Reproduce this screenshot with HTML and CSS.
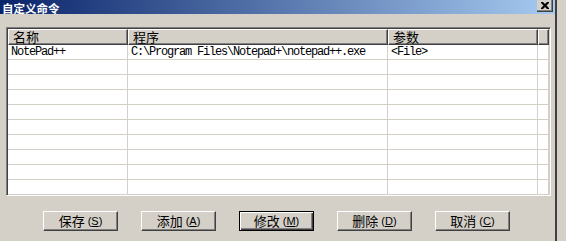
FILE: index.html
```html
<!DOCTYPE html>
<html>
<head>
<meta charset="utf-8">
<link rel="stylesheet" href="styles.css">
</head>
<body>
<div class="win">
  <div class="titlebar">
    <span class="title">自定义命令</span>
    <span class="close">
      <svg width="8" height="7" viewBox="0 0 8 7"><path d="M0 0h2l2 2 2-2h2v1l-2.5 2.5 2.5 2.5v1h-2l-2-2-2 2h-2v-1l2.5-2.5-2.5-2.5z" fill="#000"/></svg>
    </span>
  </div>
  <div class="body">
    <div class="list">
      <div class="head">
        <div class="hc">名称</div>
        <div class="hc">程序</div>
        <div class="hc">参数</div>
        <div class="hc"></div>
      </div>
      <div class="rows">
        <div class="row"><div class="c">NotePad++</div><div class="c">C:\Program Files\Notepad+\notepad++.exe</div><div class="c">&lt;File&gt;</div><div class="c"></div></div>
        <div class="row"><div class="c"></div><div class="c"></div><div class="c"></div><div class="c"></div></div>
        <div class="row"><div class="c"></div><div class="c"></div><div class="c"></div><div class="c"></div></div>
        <div class="row"><div class="c"></div><div class="c"></div><div class="c"></div><div class="c"></div></div>
        <div class="row"><div class="c"></div><div class="c"></div><div class="c"></div><div class="c"></div></div>
        <div class="row"><div class="c"></div><div class="c"></div><div class="c"></div><div class="c"></div></div>
        <div class="row"><div class="c"></div><div class="c"></div><div class="c"></div><div class="c"></div></div>
        <div class="row"><div class="c"></div><div class="c"></div><div class="c"></div><div class="c"></div></div>
        <div class="row"><div class="c"></div><div class="c"></div><div class="c"></div><div class="c"></div></div>
        <div class="row"><div class="c"></div><div class="c"></div><div class="c"></div><div class="c"></div></div>
        <div class="row"><div class="c"></div><div class="c"></div><div class="c"></div><div class="c"></div></div>
      </div>
    </div>
    <div class="buttons">
      <div class="btn">保存<span class="acc">(<u>S</u>)</span></div>
      <div class="btn">添加<span class="acc">(<u>A</u>)</span></div>
      <div class="btn def">修改<span class="acc">(<u>M</u>)</span></div>
      <div class="btn">删除<span class="acc">(<u>D</u>)</span></div>
      <div class="btn">取消<span class="acc">(<u>C</u>)</span></div>
    </div>
  </div>
</div>
</body>
</html>
```
FILE: styles.css
```css
html, body {
  margin: 0;
  padding: 0;
  background: #d4d0c8;
  width: 566px;
  height: 241px;
  overflow: hidden;
  font-family: "Noto Sans CJK SC", "Liberation Sans", sans-serif;
  font-size: 12px;
  color: #000;
}
.win {
  width: 555px;
  height: 241px;
  border-right: 2px solid #404040;
  box-sizing: content-box;
  background: #d4d0c8;
}
.titlebar {
  height: 14px;
  background: linear-gradient(to right, #0a246a, #a6caf0);
  display: flex;
  align-items: flex-start;
  justify-content: space-between;
}
.title {
  color: #fff;
  font-weight: bold;
  font-size: 11.5px;
  line-height: 17px;
  height: 14px;
  margin-left: 2px;
  margin-top: -1px;
  padding-top: 1px;
  box-sizing: border-box;
}
.close {
  width: 16px;
  height: 12px;
  box-sizing: border-box;
  background: #d4d0c8;
  border-right: 1px solid #404040;
  border-bottom: 1px solid #404040;
  box-shadow: inset -1px -1px 0 #808080;
  display: flex;
  align-items: center;
  justify-content: center;
  margin-right: 2px;
}
.body {
  padding: 13px 0 0 6px;
}
.list {
  width: 545px;
  height: 169px;
  box-sizing: border-box;
  border-top: 1px solid #808080;
  border-left: 1px solid #808080;
  border-right: 1px solid #fff;
  border-bottom: 1px solid #fff;
  box-shadow: inset 1px 1px 0 #404040, inset -1px -1px 0 #d4d0c8;
  padding: 1px;
  background: #fff;
  overflow: hidden;
}
.head, .row {
  display: grid;
  grid-template-columns: 120px 260px 150px 1fr;
}
.hc {
  height: 16px;
  box-sizing: border-box;
  background: #d4d0c8;
  border-top: 1px solid #fff;
  border-left: 1px solid #fff;
  border-right: 1px solid #404040;
  border-bottom: 1px solid #404040;
  box-shadow: inset -1px -1px 0 #808080;
  padding-left: 4px;
  line-height: 13px;
  font-size: 13px;
}
.row {
  height: 15px;
}
.c {
  border-right: 1px solid #d4d0c8;
  border-bottom: 1px solid #d4d0c8;
  font-family: "Liberation Mono", "DejaVu Sans Mono", monospace;
  font-size: 12px;
  letter-spacing: -1.2px;
  line-height: 14px;
  padding-left: 3px;
  white-space: nowrap;
  overflow: hidden;
}
.buttons {
  display: flex;
  gap: 23px;
  margin-top: 15px;
  padding-left: 37px;
}
.btn {
  width: 75px;
  height: 20px;
  box-sizing: border-box;
  background: #d4d0c8;
  border-top: 1px solid #fff;
  border-left: 1px solid #fff;
  border-right: 1px solid #404040;
  border-bottom: 1px solid #404040;
  box-shadow: inset -1px -1px 0 #808080;
  display: flex;
  align-items: center;
  justify-content: center;
  font-size: 13px;
  line-height: 14px;
}
.btn.def {
  border: 1px solid #000;
  box-shadow: inset 1px 1px 0 #fff, inset -1px -1px 0 #404040, inset -2px -2px 0 #808080;
}
.acc {
  font-family: "Liberation Sans", sans-serif;
  font-size: 11px;
  margin-left: 3px;
}
u {
  text-decoration: underline;
}
```
